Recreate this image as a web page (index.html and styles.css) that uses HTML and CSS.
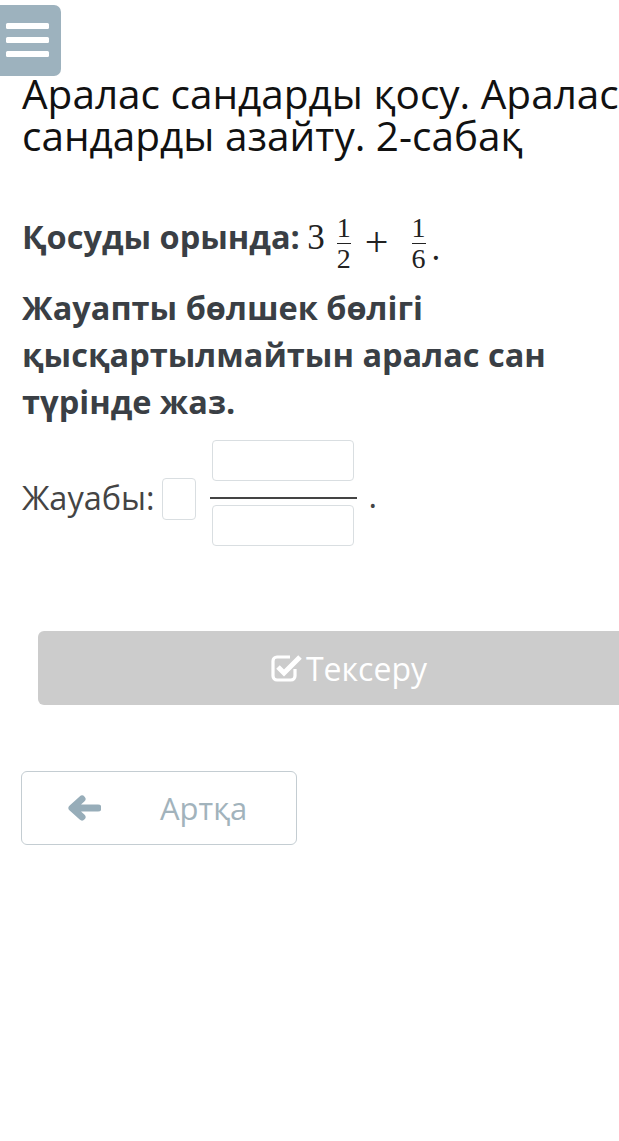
FILE: index.html
```html
<!DOCTYPE html>
<html lang="kk">
<head>
  <meta charset="UTF-8">
  <title>Аралас сандарды қосу. 2-сабақ</title>
  <meta name="viewport" content="width=device-width,initial-scale=1">
  <link rel="stylesheet" href="styles.css">
</head>
<body>
<header class="topbar">
  <button class="menu-btn" aria-label="Мәзір">
    <svg width="61" height="71" viewBox="0 0 61 71">
      <rect x="6" y="18" width="43" height="6" rx="1.5" fill="#fff"/>
      <rect x="6" y="32" width="43" height="6" rx="1.5" fill="#fff"/>
      <rect x="6" y="46" width="43" height="6" rx="1.5" fill="#fff"/>
    </svg>
  </button>
</header>
<main class="lesson">
  <h1 class="title">Аралас сандарды қосу. Аралас сандарды азайту. 2-сабақ</h1>

  <div class="task">
    <p class="prompt"><b>Қосуды орында:</b> <span class="math"><span class="digit">3</span><span class="frac"><span class="frac-num">1</span><span class="frac-den">2</span></span><span class="op">+</span><span class="frac wide"><span class="frac-num">1</span><span class="frac-den">6</span></span><span class="period">.</span></span></p>
    <p class="instr">Жауапты бөлшек бөлігі қысқартылмайтын аралас сан түрінде жаз.</p>

    <div class="answer">
      <span class="answer-label">Жауабы:</span>
      <input class="box whole" type="text">
      <span class="frac-input">
        <input class="box" type="text">
        <span class="frac-line"></span>
        <input class="box" type="text">
      </span>
      <span class="answer-dot">.</span>
    </div>
  </div>

  <button class="check-btn">
    <svg width="32" height="29" viewBox="0 0 32 29">
      <path d="M24 15v7a4 4 0 0 1-4 4H6a4 4 0 0 1-4-4V7a4 4 0 0 1 4-4h13" fill="none" stroke="#fff" stroke-width="3.2"/>
      <path d="M7 13l6 6L29 3" fill="none" stroke="#fff" stroke-width="5"/>
    </svg>
    <span>Тексеру</span>
  </button>

  <button class="back-btn">
    <svg width="34" height="26" viewBox="0 0 34 26">
      <path d="M31 13H8M15 4l-10 9 10 9" fill="none" stroke="#97adb9" stroke-width="7" stroke-linecap="round" stroke-linejoin="round"/>
    </svg>
    <span>Артқа</span>
  </button>
</main>
</body>
</html>
```

FILE: styles.css
```css
html, body {
  overflow-x: hidden;
}
body {
  margin: 0;
  background: #fff;
  font-family: "Open Sans", "Noto Sans", sans-serif;
  color: #111;
}
.topbar {
  padding-top: 5px;
}
.menu-btn {
  display: block;
  width: 61px;
  height: 71px;
  padding: 0;
  border: 0;
  border-radius: 0 7px 7px 0;
  background: #9db2be;
}
.menu-btn svg {
  display: block;
}
.lesson {
  width: 640px;
  padding-left: 22px;
}
.title {
  margin: -3px 0 0;
  font-size: 40.5px;
  font-weight: 400;
  line-height: 42px;
}
.task {
  color: #3a3f45;
}

/* question line with the formula */
.prompt {
  margin: 59px 0 0;
  font-size: 32.5px;
  line-height: 40px;
}
.math {
  font-family: "Liberation Serif", "DejaVu Serif", serif;
  font-weight: 400;
  line-height: 1;
  color: #222;
}
.digit {
  font-size: 35px;
  margin-left: -1px;
}
.frac {
  display: inline-block;
  vertical-align: -19px;
  margin-left: 10px;
  padding: 0 2px;
  font-size: 28px;
  line-height: 24px;
  text-align: center;
}
.frac.wide {
  margin-left: 21px;
}
.frac-num {
  display: block;
  padding-bottom: 3px;
  border-bottom: 1px solid #222;
}
.frac-den {
  display: block;
  padding-top: 3px;
}
.op {
  display: inline-block;
  vertical-align: -7px;
  margin-left: 12px;
  font-size: 42px;
}
.period {
  display: inline-block;
  vertical-align: -11px;
  margin-left: 4px;
  font-size: 35px;
}

.instr {
  width: 560px;
  margin: 13px 0 0;
  font-size: 32.5px;
  font-weight: 700;
  line-height: 47px;
}

/* answer: whole part + fraction */
.answer {
  display: flex;
  align-items: flex-start;
  margin-top: 15px;
  font-size: 32.5px;
  line-height: 44px;
  color: #444;
}
.answer-label {
  margin: 36px 7px 0 0;
}
.box {
  box-sizing: border-box;
  border: 1px solid #d9dee1;
  border-radius: 4px;
  background: #fff;
  padding: 0;
}
.whole {
  width: 34px;
  height: 42px;
  margin-top: 38px;
}
.frac-input {
  display: flex;
  flex-direction: column;
  align-items: center;
  margin-left: 14px;
}
.frac-input .box {
  width: 142px;
  height: 41px;
}
.frac-line {
  width: 147px;
  height: 2px;
  margin: 16px 0 6px;
  background: #444;
}
.answer-dot {
  margin: 34px 0 0 12px;
}

.check-btn {
  display: flex;
  align-items: center;
  justify-content: center;
  gap: 3px;
  width: 622px;
  height: 74px;
  margin: 85px 0 0 16px;
  border: 0;
  border-radius: 6px;
  background: #ccc;
  color: #fff;
  font-family: inherit;
  font-size: 32px;
}
.back-btn {
  display: flex;
  align-items: center;
  width: 276px;
  height: 74px;
  margin: 66px 0 0 -1px;
  padding: 0 0 0 45px;
  border: 1px solid #c4cdd2;
  border-radius: 6px;
  background: #fff;
  color: #a2b3bc;
  font-family: inherit;
  font-size: 31px;
}
.back-btn span {
  margin-left: 59px;
}
```
